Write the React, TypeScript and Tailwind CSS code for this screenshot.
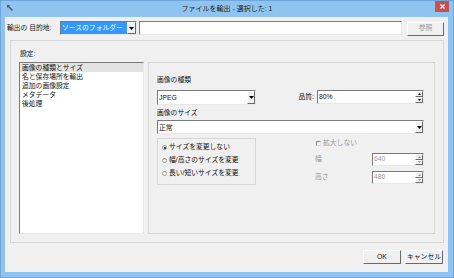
import { ReactNode } from "react";

const sunken =
  "border border-t-[#7a7a7a] border-l-[#7a7a7a] border-b-[#e8e8e8] border-r-[#e8e8e8] bg-white";
const raised =
  "border border-t-[#ffffff] border-l-[#ffffff] border-b-[#6a6a6a] border-r-[#6a6a6a] bg-[#f0f0f0]";

function Arrow() {
  return (
    <svg width="5" height="3" viewBox="0 0 5 3">
      <path d="M0 0h5L2.5 3z" fill="#000" />
    </svg>
  );
}

function Select({ value, className }: { value: string; className: string }) {
  return (
    <div className={`${sunken} flex items-stretch ${className}`}>
      <span className="flex-1 pl-[1px] leading-[13px]">{value}</span>
      <span className={`${raised} w-[8px] flex items-center justify-center`}>
        <Arrow />
      </span>
    </div>
  );
}

function Spin({ value, disabled, className }: { value: string; disabled?: boolean; className: string }) {
  return (
    <div className={`${sunken} flex items-stretch ${disabled ? "bg-[#f4f4f4]" : ""} ${className}`}>
      <span className={`flex-1 pl-[1px] flex items-center ${disabled ? "text-[#9a9a9a]" : ""}`}>{value}</span>
      <span className="w-[8px] flex flex-col">
        <span className={`${raised} flex-1 flex items-center justify-center`}>
          <svg width="3" height="2" viewBox="0 0 3 2">
            <path d="M0 2h3L1.5 0z" fill={disabled ? "#999" : "#000"} />
          </svg>
        </span>
        <span className={`${raised} flex-1 flex items-center justify-center`}>
          <svg width="3" height="2" viewBox="0 0 3 2">
            <path d="M0 0h3L1.5 2z" fill={disabled ? "#999" : "#000"} />
          </svg>
        </span>
      </span>
    </div>
  );
}

function Radio({ checked, children }: { checked?: boolean; children: ReactNode }) {
  return (
    <div className="h-[13px] flex items-center">
      <span className="w-[5px] h-[5px] rounded-full border border-[#9a9a9a] bg-white flex items-center justify-center">
        {checked && <span className="w-[2px] h-[2px] rounded-full bg-black" />}
      </span>
      <span className="ml-[2px]">{children}</span>
    </div>
  );
}

const items = ["画像の種類とサイズ", "名と保存場所を輸出", "追加の画像設定", "メタデータ", "後処理"];

export default function App() {
  return (
    <div className="w-[454px] h-[278px] bg-[#8fc4f1] border border-[#6ea7dc] flex flex-col text-[6.8px] text-[#111] font-['Liberation_Sans','Noto_Sans_CJK_JP',sans-serif]">
      {/* title bar */}
      <div className="h-[16px] relative flex items-center justify-center">
        <svg className="absolute left-[6px] top-[4px]" width="7" height="6" viewBox="0 0 7 6">
          <path d="M0 0h3L2 1l4 4-1 1-4-4-1 1z" fill="#555" />
        </svg>
        <span className="text-[7px] text-[#222]">ファイルを輸出 - 選択した: 1</span>
        <div className="absolute right-[4px] top-0 w-[14px] h-[11px] bg-[#c75050] flex items-center justify-center">
          <svg width="5" height="5" viewBox="0 0 5 5">
            <path d="M0.5 0.5l4 4M4.5 0.5l-4 4" stroke="#fff" strokeWidth="1.2" />
          </svg>
        </div>
      </div>

      {/* client */}
      <div className="ml-[4px] mr-[5px] mb-[5px] flex-1 bg-[#f0f0f0] flex flex-col">
        <div className="mt-[4px] h-[14px] flex items-center pr-[4px]">
          <span className="pl-[2px] w-[55px]">輸出の 目的地:</span>
          <div className={`${sunken} w-[77px] h-[14px] flex items-stretch`}>
            <span className="flex-1 bg-[#3399ff] text-white pl-[1px] leading-[12px]">ソースのフォルダー</span>
            <span className={`${raised} w-[9px] flex items-center justify-center`}>
              <Arrow />
            </span>
          </div>
          <div className={`${sunken} flex-1 h-[14px] ml-[2px]`} />
          <div className={`${raised} w-[37px] h-[14px] ml-[5px] mt-[1px] flex items-center justify-center text-[#9a9a9a]`}>
            参照
          </div>
        </div>

        <div className="mt-[5px] ml-[5px] mr-[4px] h-[203px] border border-[#d5d5d5] px-[8px] pb-[8px] flex flex-col">
          <div className="mt-[8px] mb-[3px] h-[10px] leading-[10px] ml-[1px]">設定:</div>
          <div className="flex-1 flex gap-[4px]">
            <div className={`${sunken} w-[125px]`}>
              {items.map((item, i) => (
                <div key={item} className={`h-[9px] leading-[9px] pl-[2px] ${i === 0 ? "bg-[#e3e3e3]" : ""}`}>
                  {item}
                </div>
              ))}
            </div>
            <div className="flex-1 border border-[#d5d5d5] pl-[8px] pr-[10px] flex flex-col">
              <div className="mt-[12px] h-[10px] leading-[10px]">画像の種類</div>
              <div className="mt-[5px] h-[15px] flex items-stretch">
                <Select value="JPEG" className="w-[99px]" />
                <div className="flex-1" />
                <span className="self-center mr-[3px]">品質:</span>
                <Spin value="80%" className="w-[107px] h-[14px]" />
              </div>
              <div className="mt-[3px] h-[10px] leading-[10px]">画像のサイズ</div>
              <Select value="正常" className="mt-[2px] h-[14px]" />
              <div className="mt-[4px] flex">
                <div className="w-[99px] h-[47px] border border-[#d5d5d5] pt-[2px] pl-[4px]">
                  <Radio checked>サイズを変更しない</Radio>
                  <Radio>幅/高さのサイズを変更</Radio>
                  <Radio>長い/短いサイズを変更</Radio>
                </div>
                <div className="flex-1 pl-[59px] flex flex-col text-[#9a9a9a]">
                  <div className="h-[10px] flex items-center">
                    <span className="w-[5px] h-[5px] ml-[1px] border border-t-[#8a8a8a] border-l-[#8a8a8a] border-b-[#ddd] border-r-[#ddd] bg-[#f4f4f4]" />
                    <span className="ml-[2px]">拡大しない</span>
                  </div>
                  <div className="mt-[5px] flex items-center">
                    <span className="flex-1">幅</span>
                    <Spin value="640" disabled className="w-[52px] h-[13px]" />
                  </div>
                  <div className="mt-[5px] flex items-center">
                    <span className="flex-1">高さ</span>
                    <Spin value="480" disabled className="w-[52px] h-[13px]" />
                  </div>
                </div>
              </div>
            </div>
          </div>
        </div>

        <div className="mt-[7px] mr-[5px] flex justify-end gap-[4px]">
          <div className={`${raised} border-b-[#4a4a4a] border-r-[#4a4a4a] w-[38px] h-[14px] flex items-center justify-center`}>OK</div>
          <div className={`${raised} w-[38px] h-[14px] flex items-center justify-center`}>キャンセル</div>
        </div>
      </div>
    </div>
  );
}
